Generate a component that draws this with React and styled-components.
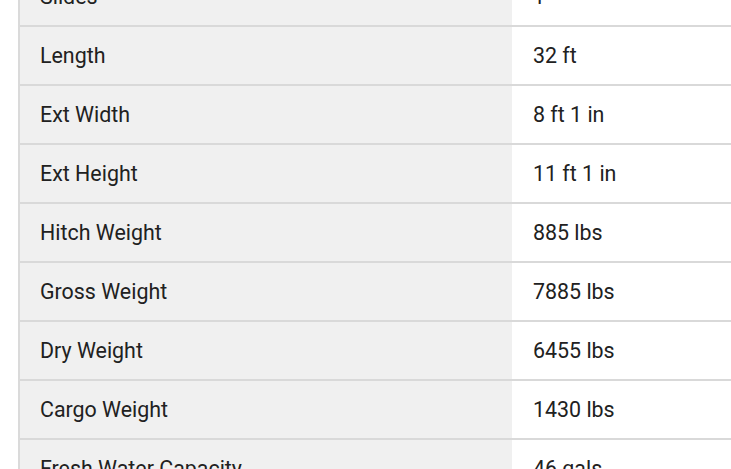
import React from "react";
import styled, { createGlobalStyle } from "styled-components";

const Global = createGlobalStyle`
  html, body { margin: 0; padding: 0; background: #ffffff; overflow: hidden; }
  body { font-family: Roboto, "Liberation Sans", Arial, sans-serif; }
`;

const Page = styled.div`
  width: 731px;
  height: 469px;
  overflow: hidden;
  padding-left: 18px;
  box-sizing: border-box;
`;

const Table = styled.div`
  margin-top: -32px;
  width: 760px;
  border-left: 2px solid #dadada;
  display: flex;
  flex-direction: column;
`;

const Row = styled.div`
  display: grid;
  grid-template-columns: 492px 1fr;
  height: 59px;
  border-bottom: 2px solid #d9d9d9;
  box-sizing: border-box;
`;

const Cell = styled.div`
  display: flex;
  align-items: center;
  padding-left: ${(p) => (p.$label ? "20px" : "21px")};
  padding-bottom: 1px;
  background: ${(p) => (p.$label ? "#f0f0f0" : "#ffffff")};
  color: #212121;
  font-size: 21.4px;
  white-space: nowrap;
`;

const rows = [
  ["Slides", "1"],
  ["Length", "32 ft"],
  ["Ext Width", "8 ft 1 in"],
  ["Ext Height", "11 ft 1 in"],
  ["Hitch Weight", "885 lbs"],
  ["Gross Weight", "7885 lbs"],
  ["Dry Weight", "6455 lbs"],
  ["Cargo Weight", "1430 lbs"],
  ["Fresh Water Capacity", "46 gals"],
];

export default function App() {
  return (
    <>
      <Global />
      <Page>
        <Table>
          {rows.map(([k, v]) => (
            <Row key={k}>
              <Cell $label>{k}</Cell>
              <Cell>{v}</Cell>
            </Row>
          ))}
        </Table>
      </Page>
    </>
  );
}
